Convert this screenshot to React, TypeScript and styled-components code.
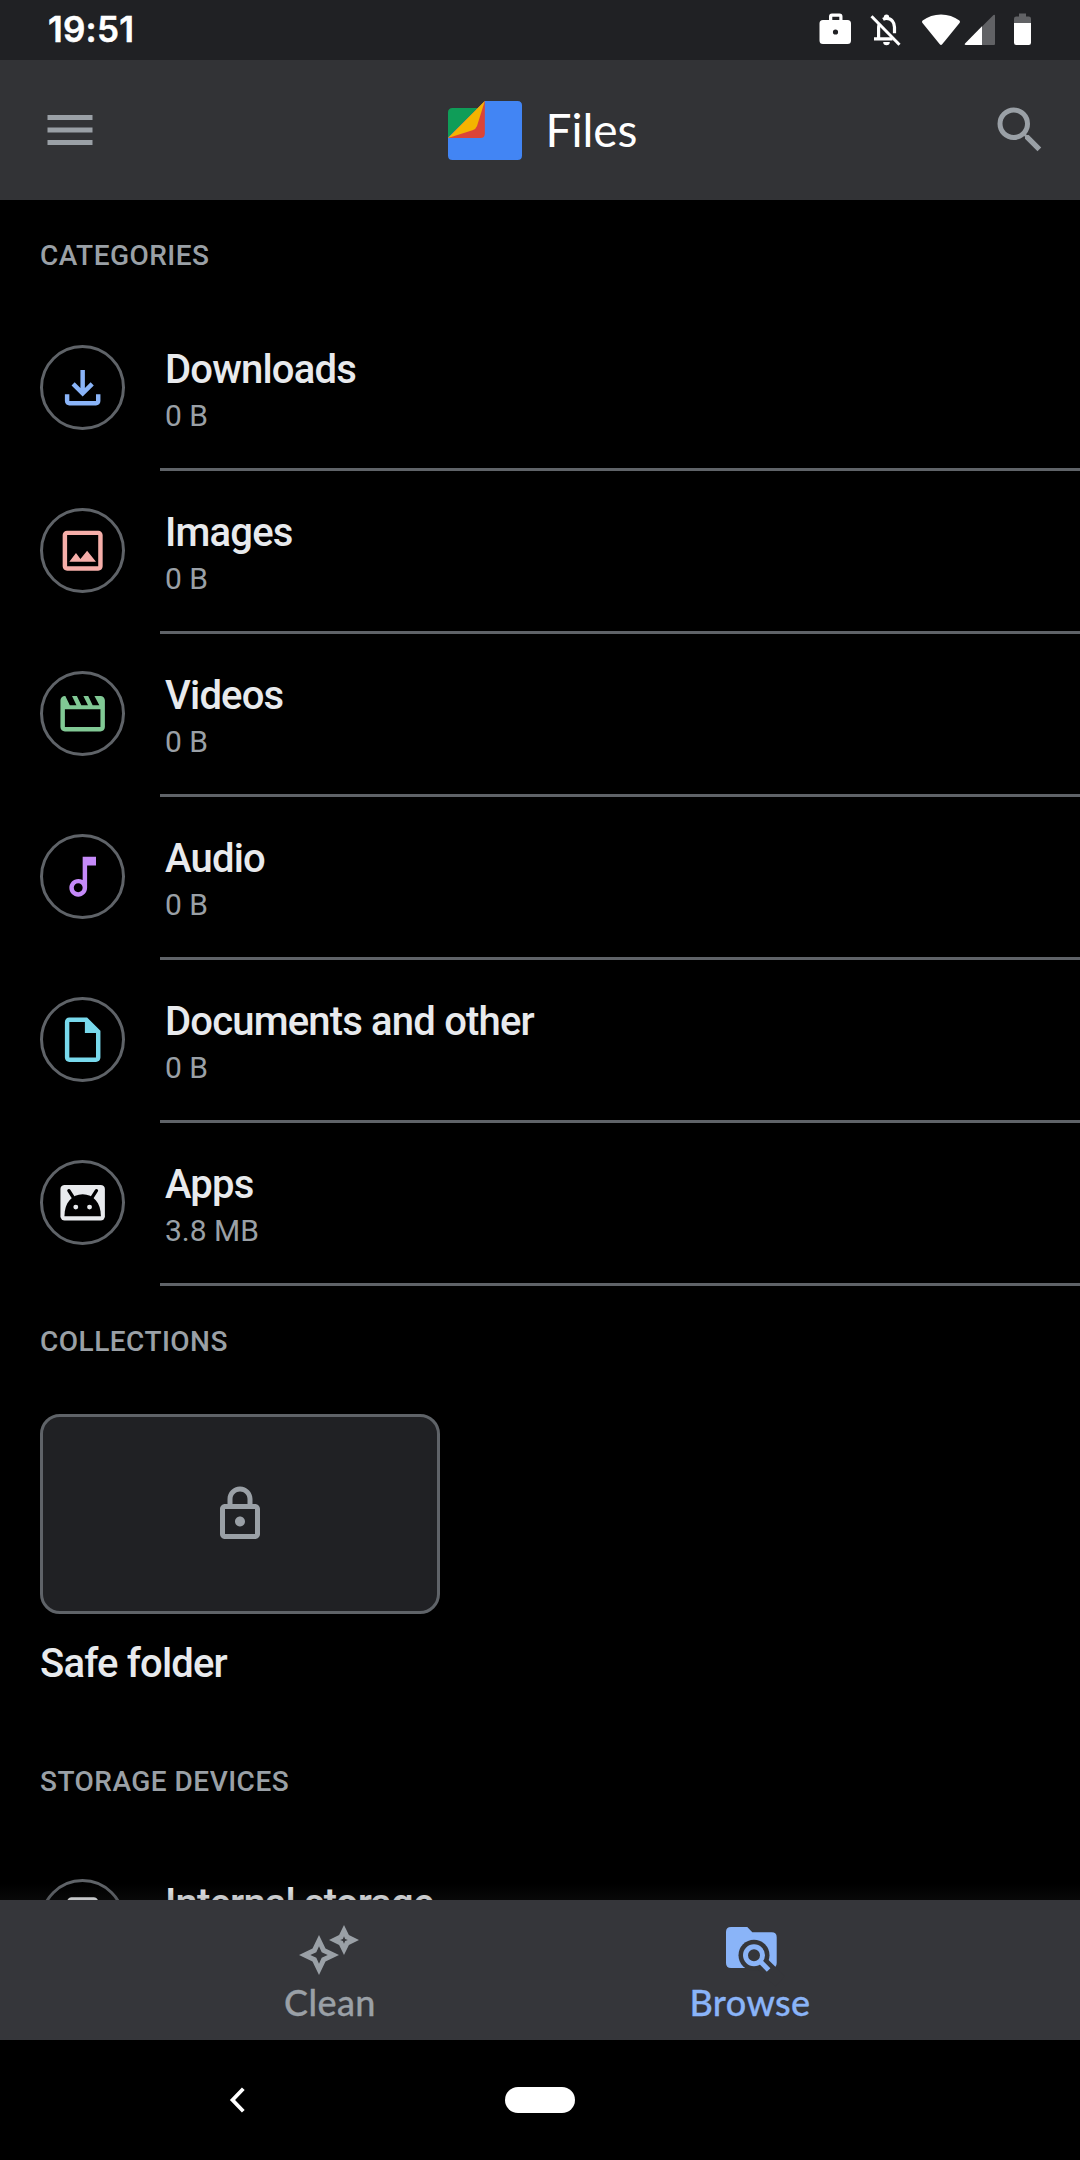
import React from "react";
import styled, { createGlobalStyle } from "styled-components";

const GlobalStyle = createGlobalStyle`
  html, body { margin: 0; padding: 0; background: #000; }
  *, *::before, *::after { box-sizing: border-box; }
  svg { display: block; flex: none; overflow: visible; }
`;

const Screen = styled.div`
  width: 1080px;
  height: 2160px;
  display: flex;
  flex-direction: column;
  overflow: hidden;
  background: #000;
  color: #e8eaed;
  font-family: Roboto, "Liberation Sans", sans-serif;
`;

const StatusBar = styled.header`
  height: 60px;
  flex: none;
  display: flex;
  align-items: center;
  justify-content: space-between;
  padding: 0 49px 0 48px;
  background: #202124;
`;

const Clock = styled.span`
  color: #fff;
  font-family: Inter, Roboto, sans-serif;
  font-size: 35px;
  font-weight: 600;
  line-height: 58px;
  height: 60px;
  letter-spacing: 0.2px;
  -webkit-text-stroke: 0.5px currentColor;
`;

const AppBar = styled.div`
  height: 140px;
  flex: none;
  display: flex;
  align-items: center;
  justify-content: space-between;
  padding: 0 30px 0 40px;
  background: #323336;
  color: #9aa0a6;
`;

const Brand = styled.div`
  display: flex;
  align-items: center;
  gap: 23px;
  margin-left: -4px;
`;

const BrandName = styled.span`
  color: #fff;
  font-family: Lato, "Open Sans", sans-serif;
  font-size: 46px;
  line-height: 60px;
`;

const Content = styled.main`
  flex: 1;
  min-height: 0;
  overflow: hidden;
  position: relative;
`;

const ScrollShade = styled.div`
  position: absolute;
  left: 0;
  right: 0;
  bottom: 0;
  height: 16px;
  background: linear-gradient(to bottom, rgba(42, 42, 42, 0), rgba(42, 42, 42, 0.2));
`;

const SectionTitle = styled.h2<{ $height?: number }>`
  margin: 0;
  height: ${(p) => p.$height ?? 108}px;
  padding: 39px 40px 0;
  color: #9aa0a6;
  font-size: 28px;
  font-weight: 500;
  line-height: 34px;
  letter-spacing: 0.48px;
`;

const Row = styled.div`
  height: 163px;
  display: flex;
  align-items: flex-start;
  padding: 37px 0 0 40px;
  gap: 40px;
  background: linear-gradient(#5f6368, #5f6368) 160px 100% / 920px 3px no-repeat;
`;

const IconRing = styled.div<{ $color: string }>`
  width: 85px;
  height: 85px;
  flex: none;
  display: flex;
  align-items: center;
  justify-content: center;
  border: 3px solid #5f6368;
  border-radius: 50%;
  color: ${(p) => p.$color};
`;

const RowText = styled.div`
  display: flex;
  flex-direction: column;
  gap: 3px;
`;

const ItemTitle = styled.span`
  font-size: 40px;
  font-weight: 500;
  line-height: 50px;
  letter-spacing: -0.82px;
  white-space: nowrap;
`;

const ItemSize = styled.span`
  color: #9aa0a6;
  font-size: 30px;
  line-height: 36px;
`;

const Collection = styled.div`
  display: flex;
  flex-direction: column;
  gap: 25px;
  height: 332px;
  padding: 20px 40px 0;
`;

const FolderCard = styled.div`
  width: 400px;
  height: 200px;
  display: flex;
  align-items: center;
  justify-content: center;
  border: 3px solid #5f6368;
  border-radius: 20px;
  background: #202124;
  color: #9aa0a6;
`;

const TabBar = styled.nav`
  height: 140px;
  flex: none;
  display: flex;
  justify-content: center;
  background: #35363a;
`;

const Tab = styled.div<{ $active?: boolean }>`
  width: 420px;
  display: flex;
  flex-direction: column;
  align-items: center;
  padding-top: 20px;
  color: ${(p) => (p.$active ? "#8ab4f8" : "#9aa0a6")};
`;

const TabLabel = styled.span`
  font-family: Lato, "Open Sans", sans-serif;
  font-size: 36px;
  font-weight: 500;
  line-height: 44px;
  letter-spacing: 0.4px;
  -webkit-text-stroke: 0.3px currentColor;
`;

const SystemNav = styled.footer`
  height: 120px;
  flex: none;
  display: grid;
  grid-template-columns: 475px 130px 475px;
  align-items: center;
  justify-items: center;
`;

const HomePill = styled.div`
  width: 70px;
  height: 26px;
  border-radius: 13px;
  background: #fff;
`;

const Glyph = ({ size, d }: { size: number; d: string }) => (
  <svg width={size} height={size} viewBox="0 0 24 24" fill="currentColor">
    <path fillRule="evenodd" d={d} />
  </svg>
);

const ICON = 160 / 3;

const paths = {
  menu: "M3 18h18v-2H3v2zm0-5h18v-2H3v2zm0-7v2h18V6H3z",
  search:
    "M15.5 14h-.79l-.28-.27A6.47 6.47 0 0 0 16 9.5 6.5 6.5 0 1 0 9.5 16c1.61 0 3.09-.59 4.23-1.57l.27.28v.79l5 4.99L20.49 19l-4.99-5zm-6 0C7.01 14 5 11.99 5 9.5S7.01 5 9.5 5 14 7.01 14 9.5 11.99 14 9.5 14z",
  download:
    "M13 4v8.17l2.59-2.58L17 11l-5 5-5-5 1.41-1.41L11 12.17V4h2zM4 15h2v3h12v-3h2v3c0 1.1-.9 2-2 2H6c-1.1 0-2-.9-2-2v-3z",
  image:
    "M19 3H5c-1.1 0-2 .9-2 2v14c0 1.1.9 2 2 2h14c1.1 0 2-.9 2-2V5c0-1.1-.9-2-2-2zm0 16H5V5h14v14zM6 17l3-4 2 2.7L14 12l4 5H6z",
  video:
    "M4 4h.2l2 4.2h3L7.2 4h2.2l2 4.2h3L12.3 4h2.2l2 4.2h3L17.3 4H20c1.1 0 2 .9 2 2v12c0 1.1-.9 2-2 2H4c-1.1 0-2-.9-2-2V6c0-1.1.9-2 2-2zM4 10v8h16v-8H4z",
  audio:
    "M12 3v10.55c-.59-.34-1.27-.55-2-.55-2.21 0-4 1.79-4 4s1.79 4 4 4 4-1.79 4-4V7h4V3h-6zm-2 16c-1.1 0-2-.9-2-2s.9-2 2-2 2 .9 2 2-.9 2-2 2z",
  document:
    "M14 2H6c-1.1 0-2 .9-2 2v16c0 1.1.9 2 2 2h12c1.1 0 2-.9 2-2V8l-6-6zM6 20V4h7v5h5v11H6z",
  phone:
    "M17 1H7c-1.1 0-2 .9-2 2v18c0 1.1.9 2 2 2h10c1.1 0 2-.9 2-2V3c0-1.1-.9-2-2-2zm0 18H7V5h10v14z",
  lock:
    "M18 8h-1V6c0-2.76-2.24-5-5-5S7 3.24 7 6v2H6c-1.1 0-2 .9-2 2v10c0 1.1.9 2 2 2h12c1.1 0 2-.9 2-2V10c0-1.1-.9-2-2-2zM9 6c0-1.66 1.34-3 3-3s3 1.34 3 3v2H9V6zm9 14H6V10h12v10zm-6-3c1.1 0 2-.9 2-2s-.9-2-2-2-2 .9-2 2 .9 2 2 2z",
};

const AndroidIcon = () => (
  <svg width={ICON} height={ICON} viewBox="0 0 24 24">
    <rect x="2" y="4" width="20" height="16" rx="1.9" fill="currentColor" />
    <path d="M3.8 18.1C3.8 12 7.2 8.2 12 8.2s8.2 3.8 8.2 9.9z" fill="#000" />
    <path d="M5.8 6.6l2.3 3.6M18.2 6.6l-2.3 3.6" stroke="#000" strokeWidth="1.5" strokeLinecap="round" />
    <circle cx="8.9" cy="14" r="1.1" fill="currentColor" />
    <circle cx="15.1" cy="14" r="1.1" fill="currentColor" />
  </svg>
);

const StatusIcons = () => (
  <svg width="212" height="60" viewBox="819 0 212 60" fill="#fff">
    <path
      fillRule="evenodd"
      d="M829 20v-3.500q0-3 3-3h7.500q3 0 3 3V20h5q3.500 0 3.500 3.500v17q0 3.500-3.500 3.500h-24.500q-3.500 0-3.500-3.500v-17q0-3.500 3.500-3.500zM832.300 20h7v-3.200h-7zM835.500 29.400a2.600 2.600 0 1 0 0 5.200 2.600 2.600 0 0 0 0-5.200z"
    />
    <g fill="none" stroke="#fff" strokeWidth="3.2">
      <path d="M871.5 16.3L899.5 44.7" strokeWidth="3" />
      <path d="M874 38.8h18.5M878.6 38.8V28q0-2.2.7-4M883 19.3q1.7-1 3.5-1c5 0 8 4 8 9v6" />
    </g>
    <path d="M883.8 18.5v-1.3a2.7 2.7 0 0 1 5.4 0v1.3zM883.2 42h6.600a3.300 3.300 0 0 1-6.600 0z" />
    <path d="M922.6 20.5C928 16.500 934 14.500 941 14.500s13 2 18.400 6q1 .9.3 2.200L942.200 44.200q-1.200 1.400-2.400 0L922.300 22.700q-.7-1.300.3-2.200z" />
    <path d="M993.5 15.1q1.500-1 1.500.8V44q0 1-1 1H966q-2-.1-.9-1.500z" fill="#616265" />
    <path d="M982 26.300V45H966q-2-.1-.9-1.500z" />
    <path d="M1019 16.500v-3h7v3h2.800q2.200 0 2.200 2.200V23h-17v-4.300q0-2.200 2.200-2.200z" fill="#616265" />
    <path d="M1014 23h17v19.800q0 2.200-2.200 2.200h-12.600q-2.200 0-2.200-2.200z" />
  </svg>
);

const FilesLogo = () => (
  <svg width="74" height="59" viewBox="0 0 74 59">
    <path d="M0 36.500V11.500Q0 7 4.500 7H31L33 20z" fill="#0f9d58" />
    <path d="M0 36.500L37 0h32.500Q74 0 74 4.500v50q0 4.500-4.500 4.500h-65Q0 59 0 54.500z" fill="#4285f4" />
    <path d="M0 37L36.800 0V32.500Q36.800 37 32.300 37z" fill="#db4437" />
    <path d="M0 37L36.800 0L29 25q-1 3-4.500 4.200z" fill="#f4b400" />
  </svg>
);

const CleanIcon = () => (
  <svg width="60" height="60" viewBox="0 0 60 60" fill="currentColor" fillRule="evenodd">
    <path d="M19 15l6.500 13.500 13.500 6.500-13.500 6.500-6.500 13.500-6.500-13.500-13.500-6.500 13.500-6.500zM19 26.300l-2.700 6-6 2.700 6 2.700 2.700 6 2.700-6 6-2.700-6-2.700z" />
    <path d="M44 5l4.900 10.100 10.100 4.900-10.100 4.900L44 35l-4.900-10.100L29 20l10.100-4.900zM44 16.200l-1.100 2.700-2.700 1.100 2.700 1.100 1.100 2.700 1.100-2.700 2.700-1.100-2.700-1.100z" />
  </svg>
);

const BrowseIcon = () => (
  <svg width="60" height="60" viewBox="0 0 60 60" fill="none">
    <path d="M11 7h16.300l5 5.300H51.700q5 0 5 5V43q0 5-5 5H11q-5 0-5-5V12q0-5 5-5z" fill="currentColor" />
    <circle cx="34" cy="35.300" r="15.500" fill="#35363a" />
    <path d="M34 35.300L60 61.300" stroke="#35363a" strokeWidth="14" />
    <circle cx="34" cy="35.300" r="8.500" stroke="currentColor" strokeWidth="5" />
    <path d="M40 41.300L48.600 49.900" stroke="currentColor" strokeWidth="5" />
  </svg>
);

const BackIcon = () => (
  <svg width="15" height="26" viewBox="0 0 15 26" fill="none" stroke="#fff" strokeWidth="3.800">
    <path d="M13.300 1.700L2.500 13l10.800 11.300" />
  </svg>
);

const categories = [
  { title: "Downloads", size: "0 B", color: "#8ab4f8", icon: <Glyph size={ICON} d={paths.download} /> },
  { title: "Images", size: "0 B", color: "#f6aea9", icon: <Glyph size={ICON} d={paths.image} /> },
  { title: "Videos", size: "0 B", color: "#81c995", icon: <Glyph size={ICON} d={paths.video} /> },
  { title: "Audio", size: "0 B", color: "#c58af9", icon: <Glyph size={ICON} d={paths.audio} /> },
  { title: "Documents and other", size: "0 B", color: "#78d9ec", icon: <Glyph size={ICON} d={paths.document} /> },
  { title: "Apps", size: "3.8 MB", color: "#e8eaed", icon: <AndroidIcon /> },
];

export default function App() {
  return (
    <Screen>
      <GlobalStyle />
      <StatusBar>
        <Clock>19:51</Clock>
        <StatusIcons />
      </StatusBar>
      <AppBar>
        <Glyph size={60} d={paths.menu} />
        <Brand>
          <FilesLogo />
          <BrandName>Files</BrandName>
        </Brand>
        <Glyph size={60} d={paths.search} />
      </AppBar>
      <Content>
        <SectionTitle>CATEGORIES</SectionTitle>
        {categories.map((c) => (
          <Row key={c.title}>
            <IconRing $color={c.color}>{c.icon}</IconRing>
            <RowText>
              <ItemTitle>{c.title}</ItemTitle>
              <ItemSize>{c.size}</ItemSize>
            </RowText>
          </Row>
        ))}
        <SectionTitle>COLLECTIONS</SectionTitle>
        <Collection>
          <FolderCard>
            <Glyph size={60} d={paths.lock} />
          </FolderCard>
          <ItemTitle>Safe folder</ItemTitle>
        </Collection>
        <SectionTitle $height={116}>STORAGE DEVICES</SectionTitle>
        <Row>
          <IconRing $color="#e8eaed">
            <Glyph size={ICON} d={paths.phone} />
          </IconRing>
          <ItemTitle>Internal storage</ItemTitle>
        </Row>
        <ScrollShade />
      </Content>
      <TabBar>
        <Tab>
          <CleanIcon />
          <TabLabel>Clean</TabLabel>
        </Tab>
        <Tab $active>
          <BrowseIcon />
          <TabLabel>Browse</TabLabel>
        </Tab>
      </TabBar>
      <SystemNav>
        <BackIcon />
        <HomePill />
      </SystemNav>
    </Screen>
  );
}
